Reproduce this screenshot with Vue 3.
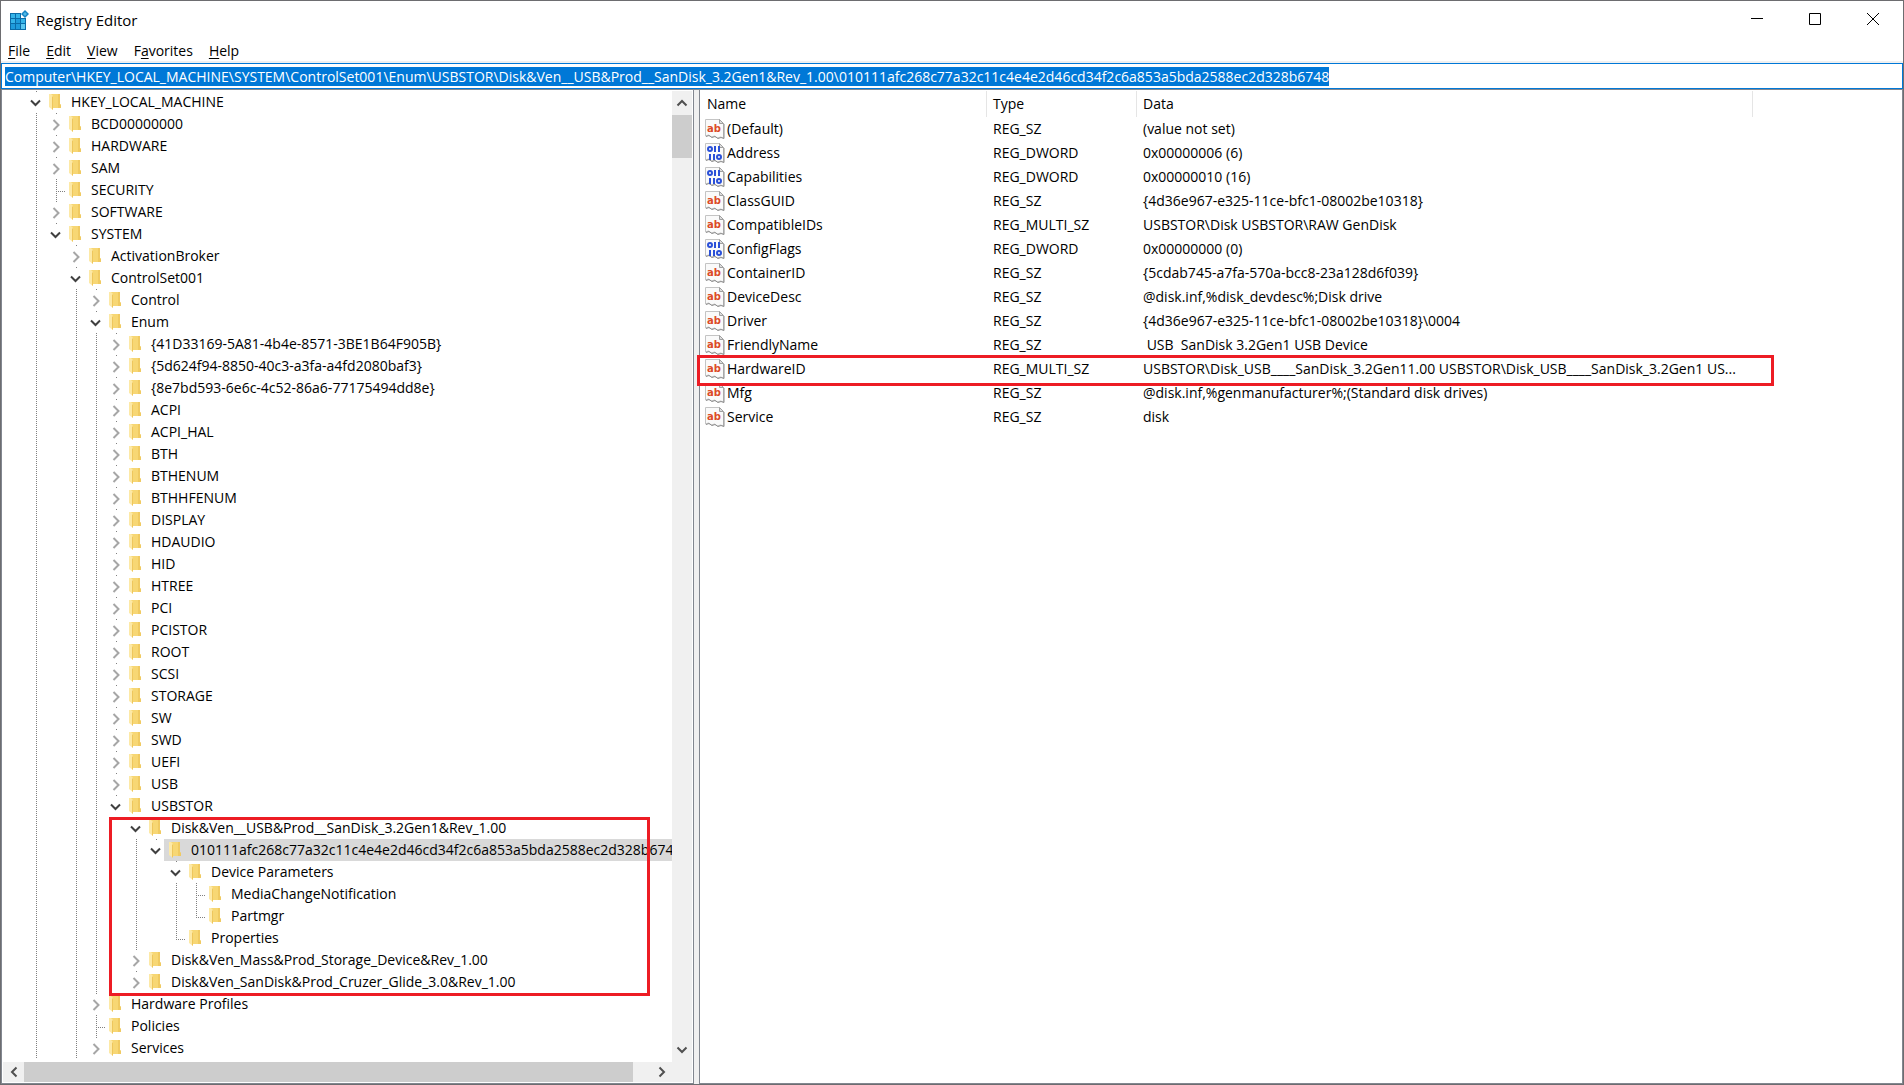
<script setup>
import { ref, computed, onMounted } from 'vue'

const path = ref(
  'Computer\\HKEY_LOCAL_MACHINE\\SYSTEM\\ControlSet001\\Enum\\USBSTOR\\Disk&Ven__USB&Prod__SanDisk_3.2Gen1&Rev_1.00\\010111afc268c77a32c11c4e4e2d46cd34f2c6a853a5bda2588ec2d328b6748'
)
const addressBox = ref(null)
onMounted(() => {
  addressBox.value.focus()
  addressBox.value.select()
})

const menus = [
  ['', 'F', 'ile'],
  ['', 'E', 'dit'],
  ['', 'V', 'iew'],
  ['F', 'a', 'vorites'],
  ['', 'H', 'elp'],
]

// [depth, key name, state]: '+' collapsed, '-' expanded, '' no subkeys
const keys = [
  [0, 'HKEY_LOCAL_MACHINE', '-'],
  [1, 'BCD00000000', '+'],
  [1, 'HARDWARE', '+'],
  [1, 'SAM', '+'],
  [1, 'SECURITY', ''],
  [1, 'SOFTWARE', '+'],
  [1, 'SYSTEM', '-'],
  [2, 'ActivationBroker', '+'],
  [2, 'ControlSet001', '-'],
  [3, 'Control', '+'],
  [3, 'Enum', '-'],
  [4, '{41D33169-5A81-4b4e-8571-3BE1B64F905B}', '+'],
  [4, '{5d624f94-8850-40c3-a3fa-a4fd2080baf3}', '+'],
  [4, '{8e7bd593-6e6c-4c52-86a6-77175494dd8e}', '+'],
  ...['ACPI', 'ACPI_HAL', 'BTH', 'BTHENUM', 'BTHHFENUM', 'DISPLAY', 'HDAUDIO', 'HID', 'HTREE', 'PCI',
    'PCISTOR', 'ROOT', 'SCSI', 'STORAGE', 'SW', 'SWD', 'UEFI', 'USB'].map((name) => [4, name, '+']),
  [4, 'USBSTOR', '-'],
  [5, 'Disk&Ven__USB&Prod__SanDisk_3.2Gen1&Rev_1.00', '-'],
  [6, '010111afc268c77a32c11c4e4e2d46cd34f2c6a853a5bda2588ec2d328b6748', '-'],
  [7, 'Device Parameters', '-'],
  [8, 'MediaChangeNotification', ''],
  [8, 'Partmgr', ''],
  [7, 'Properties', ''],
  [5, 'Disk&Ven_Mass&Prod_Storage_Device&Rev_1.00', '+'],
  [5, 'Disk&Ven_SanDisk&Prod_Cruzer_Glide_3.0&Rev_1.00', '+'],
  [3, 'Hardware Profiles', '+'],
  [3, 'Policies', ''],
  [3, 'Services', '+'],
]
// depths whose key lists go on below the visible part of the tree
const openDepths = [0, 2, 3]

function goesOn(index, depth) {
  for (let i = index + 1; i < keys.length; i++) {
    if (keys[i][0] < depth) return false
    if (keys[i][0] === depth) return true
  }
  return openDepths.includes(depth)
}

const rows = computed(() =>
  keys.map(([depth, name, state], index) => ({
    name,
    state,
    depth,
    selected: depth === 6,
    more: goesOn(index, depth),
    guides: Array.from({ length: depth }, (_, d) => goesOn(index, d)),
  }))
)

const values = [
  ['(Default)', 'REG_SZ', '(value not set)'],
  ['Address', 'REG_DWORD', '0x00000006 (6)'],
  ['Capabilities', 'REG_DWORD', '0x00000010 (16)'],
  ['ClassGUID', 'REG_SZ', '{4d36e967-e325-11ce-bfc1-08002be10318}'],
  ['CompatibleIDs', 'REG_MULTI_SZ', 'USBSTOR\\Disk USBSTOR\\RAW GenDisk'],
  ['ConfigFlags', 'REG_DWORD', '0x00000000 (0)'],
  ['ContainerID', 'REG_SZ', '{5cdab745-a7fa-570a-bcc8-23a128d6f039}'],
  ['DeviceDesc', 'REG_SZ', '@disk.inf,%disk_devdesc%;Disk drive'],
  ['Driver', 'REG_SZ', '{4d36e967-e325-11ce-bfc1-08002be10318}\\0004'],
  ['FriendlyName', 'REG_SZ', ' USB  SanDisk 3.2Gen1 USB Device'],
  ['HardwareID', 'REG_MULTI_SZ', 'USBSTOR\\Disk_USB____SanDisk_3.2Gen11.00 USBSTOR\\Disk_USB____SanDisk_3.2Gen1 US...'],
  ['Mfg', 'REG_SZ', '@disk.inf,%genmanufacturer%;(Standard disk drives)'],
  ['Service', 'REG_SZ', 'disk'],
]
</script>

<template>
  <div class="window">
    <header class="titlebar">
      <svg class="app-icon" width="20" height="20" viewBox="0 0 20 20" aria-hidden="true">
        <path d="M1 3h11v5h5v12H1z" fill="#0a6ca8" />
        <g fill="#35b4e8">
          <path d="M2 4h4v4H2zM7 4h4v4H7zM2 9h4v4H2zM12 9h4v4h-4z" />
          <path d="M7 9h4v4H7zM2 14h4v5H2zM7 14h4v5H7z" fill="#1e9bdb" />
          <path d="M12 14h4v5h-4z" fill="#5cc8f0" />
        </g>
        <path d="M16 0l4 4-4 4-4-4z" fill="#1683c4" />
        <path d="M16 2l2 2-2 2-2-2z" fill="#4fb9e6" />
      </svg>
      <h1>Registry Editor</h1>
      <div class="caption">
        <button type="button" aria-label="Minimize">
          <svg width="12" height="12" viewBox="0 0 12 12"><path d="M0 5.5h12" stroke="#000" /></svg>
        </button>
        <button type="button" aria-label="Maximize">
          <svg width="12" height="12" viewBox="0 0 12 12"><path d="M.5.5h11v11H.5z" fill="none" stroke="#000" /></svg>
        </button>
        <button type="button" aria-label="Close">
          <svg width="12" height="12" viewBox="0 0 12 12"><path d="M0 0l12 12M12 0L0 12" stroke="#000" /></svg>
        </button>
      </div>
    </header>

    <nav class="menubar">
      <button v-for="m in menus" :key="m.join('')" type="button">{{ m[0] }}<u>{{ m[1] }}</u>{{ m[2] }}</button>
    </nav>

    <div class="address">
      <input ref="addressBox" v-model="path" type="text" aria-label="Key path" spellcheck="false" />
    </div>

    <main class="panes">
      <section class="tree-pane">
        <div class="tree" role="tree" aria-label="Registry keys">
          <div
            v-for="row in rows"
            :key="row.name"
            class="key"
            role="treeitem"
            :aria-level="row.depth + 1"
            :aria-selected="row.selected"
          >
            <span v-for="(on, d) in row.guides" :key="d" class="guide" :class="{ line: on }"></span>
            <span
              class="guide"
              :class="{ dot: row.state, branch: !row.state, end: !row.state && !row.more }"
            >
              <svg v-if="row.state === '-'" width="20" height="22" viewBox="0 0 20 22">
                <path d="M5 9.500l4.500 4.500 4.500-4.500" fill="none" stroke="#404040" stroke-width="2" />
              </svg>
              <svg v-else-if="row.state === '+'" width="20" height="22" viewBox="0 0 20 22">
                <path d="M7.500 7l5 5-5 5" fill="none" stroke="#a6a6a6" stroke-width="2" />
              </svg>
            </span>
            <span class="label" :class="{ selected: row.selected }">
              <svg width="13" height="17" viewBox="0 0 13 17" aria-hidden="true">
                <path d="M2 0h9v10l1 1v3H2z" fill="#f7d774" />
                <path d="M9 0h2v10l1 1v3H9z" fill="#f0ca62" />
                <path d="M0 0h2l2 2v14l-4-3z" fill="#fde9a6" />
                <path d="M3 3l1-1v14l-1-1z" fill="#eec65c" />
              </svg>
              <span class="name">{{ row.name }}</span>
            </span>
          </div>
          <div class="mark mark-keys"></div>
        </div>
        <div class="scroll vertical">
          <button type="button" aria-label="Scroll up">
            <svg width="12" height="8" viewBox="0 0 12 8"><path d="M1.500 6.500L6 2l4.500 4.500" /></svg>
          </button>
          <div class="thumb"></div>
          <button type="button" class="last" aria-label="Scroll down">
            <svg width="12" height="8" viewBox="0 0 12 8"><path d="M1.500 1.500L6 6l4.500-4.500" /></svg>
          </button>
        </div>
        <div class="scroll horizontal">
          <button type="button" aria-label="Scroll left">
            <svg width="8" height="12" viewBox="0 0 8 12"><path d="M6.500 1.500L2 6l4.500 4.500" /></svg>
          </button>
          <div class="thumb"></div>
          <button type="button" class="last" aria-label="Scroll right">
            <svg width="8" height="12" viewBox="0 0 8 12"><path d="M1.500 1.500L6 6l-4.500 4.500" /></svg>
          </button>
        </div>
      </section>

      <section class="list-pane">
        <table>
          <colgroup>
            <col class="c-name" />
            <col class="c-type" />
            <col class="c-data" />
            <col />
          </colgroup>
          <thead>
            <tr>
              <th scope="col">Name</th>
              <th scope="col">Type</th>
              <th scope="col">Data</th>
              <td></td>
            </tr>
          </thead>
          <tbody>
            <tr v-for="v in values" :key="v[0]">
              <td class="value-name">
                <div>
                  <svg width="20" height="20" viewBox="0 0 20 20" aria-hidden="true">
                    <path
                      d="M.5.5h14l4 4v14.500l-3-1-3 1-3-2-3 1-3-2-3 1z"
                      fill="#fafafa"
                      stroke="#c4c4c4"
                    />
                    <path d="M19 5v14.500l-3-1-3 1-3-2-3 1-3-2-3 1" fill="none" stroke="#8e8e8e" />
                    <path d="M14.500.5v4h4z" fill="#ddd" stroke="#a0a0a0" />
                    <g v-if="v[1] === 'REG_DWORD'" fill="none" stroke="#2a50d8" stroke-width="2">
                      <ellipse cx="5" cy="6" rx="2" ry="2" />
                      <path d="M10 3v6M14 3v6M5 11v6M9 11v6" />
                      <ellipse cx="14" cy="14" rx="2" ry="2" />
                    </g>
                    <text v-else class="ab" x="2" y="13">ab</text>
                  </svg>
                  <span>{{ v[0] }}</span>
                </div>
              </td>
              <td>{{ v[1] }}</td>
              <td>{{ v[2] }}</td>
              <td></td>
            </tr>
          </tbody>
        </table>
        <div class="mark mark-value"></div>
      </section>
    </main>
  </div>
</template>

<style>
body {
  margin: 0;
}
</style>

<style scoped>
.window {
  box-sizing: border-box;
  min-height: 100vh;
  display: flex;
  flex-direction: column;
  border: 1px solid #6d6d70;
  background: #fff;
  color: #000;
  font: 14px/20px 'Open Sans', 'Noto Sans', sans-serif;
}

button {
  border: 0;
  padding: 0;
  background: none;
  color: inherit;
  font: inherit;
}

.titlebar {
  display: flex;
  align-items: center;
  height: 38px;
  padding-left: 8px;
}

.app-icon {
  margin-right: 7px;
}

h1 {
  margin: 0;
  flex: 1;
  font-size: 15px;
  font-weight: 400;
}

.caption {
  display: flex;
  height: 36px;
  align-self: flex-start;
  padding-right: 1px;
}

.caption button {
  width: 58px;
  display: flex;
  justify-content: center;
  align-items: center;
}

.menubar {
  display: flex;
  gap: 16px;
  padding: 2px 7px 0;
  height: 20px;
  border-bottom: 2px solid #f0f0f0;
}

u {
  text-underline-offset: 2px;
}

.address {
  display: flex;
  border-bottom: 1px solid #828790;
}

.address input {
  flex: 1;
  min-width: 0;
  height: 26px;
  box-sizing: border-box;
  padding: 2px 3px;
  border: 1px solid #0078d7;
  outline: 0;
  background: #fff;
  font: inherit;
}

.address input::selection {
  background: #0078d7;
  color: #fff;
}

.panes {
  flex: 1;
  display: flex;
  background: #f0f0f0;
}

.tree-pane {
  width: 693px;
  flex: none;
  box-sizing: border-box;
  display: grid;
  grid-template: 1fr 20px / minmax(0, 1fr) 20px;
  padding: 0 1px 1px;
  border: solid #828790;
  border-width: 0 1px 1px;
  background: #fff;
}

.tree {
  position: relative;
  overflow: hidden;
  padding: 1px 1px 2px 0;
}

.key {
  display: flex;
  height: 22px;
  line-height: 22px;
  padding-left: 23px;
}

.guide {
  flex: none;
  width: 20px;
  background-repeat: no-repeat;
}

.line {
  background-image: repeating-linear-gradient(#808080 0 1px, transparent 1px 2px);
  background-size: 1px 22px;
  background-position: 10px 0;
}

.dot {
  background-image: linear-gradient(#808080, #808080);
  background-size: 1px 1px;
  background-position: 10px 0;
}

.branch {
  background-image:
    repeating-linear-gradient(#808080 0 1px, transparent 1px 2px),
    repeating-linear-gradient(90deg, #808080 0 1px, transparent 1px 2px);
  background-size: 1px 22px, 9px 1px;
  background-position: 10px 0, 10px 12px;
}

.branch.end {
  background-size: 1px 13px, 9px 1px;
}

.guide svg {
  display: block;
}

.label {
  display: flex;
  gap: 9px;
  margin-left: -2px;
  padding-left: 5px;
  white-space: nowrap;
}

.label svg {
  flex: none;
  margin-top: 3px;
}

.selected {
  background: #d9d9d9;
}

.scroll {
  display: flex;
  background: #f0f0f0;
}

.scroll button {
  flex: none;
  display: flex;
  justify-content: center;
  align-items: center;
}

.scroll path {
  fill: none;
  stroke: #505050;
  stroke-width: 2;
}

.scroll .thumb {
  background: #cdcdcd;
}

.scroll .last {
  margin: auto 0 0 auto;
}

.vertical {
  flex-direction: column;
  margin-top: 1px;
}

.vertical button {
  width: 20px;
  height: 24px;
}

.vertical .thumb {
  height: 43px;
}

.horizontal {
  grid-column: 1 / 3;
  padding-right: 20px;
}

.horizontal button {
  width: 21px;
  height: 20px;
}

.horizontal .thumb {
  width: 609px;
}

.list-pane {
  position: relative;
  flex: 1;
  min-width: 0;
  margin-left: 5px;
  border: solid #828790;
  border-width: 0 1px 1px;
  background: #fff;
}

table {
  width: 100%;
  table-layout: fixed;
  border-collapse: separate;
  border-spacing: 0;
  margin-top: 1px;
}

.c-name {
  width: 287px;
}

.c-type {
  width: 150px;
}

.c-data {
  width: 616px;
}

th,
td {
  height: 24px;
  padding: 0 0 0 6px;
  text-align: left;
  font-weight: 400;
  white-space: pre;
}

th {
  height: 26px;
  padding-left: 7px;
  border-right: 1px solid #e5e5e5;
}

th:not(:first-child) {
  padding-left: 6px;
}

td.value-name {
  padding-left: 5px;
}

.value-name div {
  display: flex;
  align-items: center;
  gap: 2px;
}

.ab {
  font: bold 10px 'DejaVu Sans', sans-serif;
  fill: #dc4a28;
}

.mark {
  position: absolute;
  box-sizing: border-box;
  border: 3px solid #ed1c24;
  pointer-events: none;
}

.mark-keys {
  top: 727px;
  left: 106px;
  width: 541px;
  height: 179px;
}

.mark-value {
  top: 265px;
  left: -3px;
  width: 1077px;
  height: 31px;
}
</style>
